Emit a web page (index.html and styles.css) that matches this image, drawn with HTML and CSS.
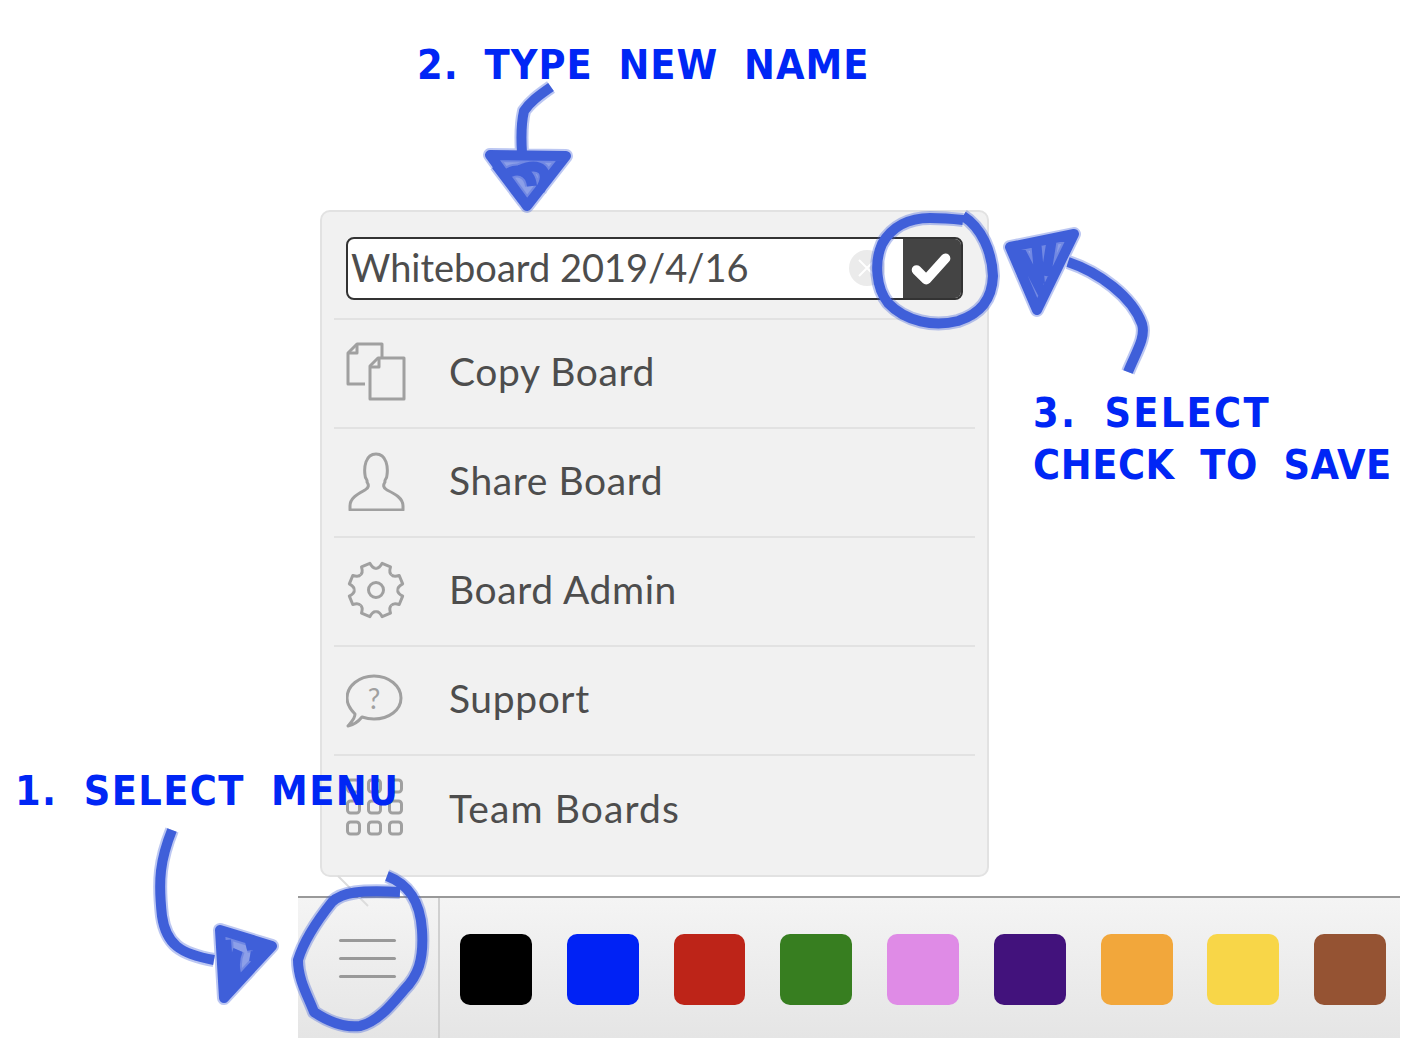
FILE: index.html
```html
<!DOCTYPE html>
<html lang="en">
<head>
    <meta charset="UTF-8">
    <meta name="viewport" content="width=device-width, initial-scale=1.0">
    <title>Rename a board</title>
    <link rel="stylesheet" href="styles.css">
</head>
<body>
    <div class="stage">
        <div class="popup">
            <div class="nameRow">
                <div class="nameField">
                    <input class="nameInput" type="text" value="Whiteboard 2019/4/16">
                    <span class="clearBtn">
                        <svg viewBox="0 0 36 36" width="36" height="36"><path class="clearX" d="M10 10 L26 26 M26 10 L10 26"/></svg>
                    </span>
                    <button class="saveBtn">
                        <svg viewBox="0 0 60 60" width="58" height="60"><path class="checkMark" d="M14 31 L24 41 L44 19"/></svg>
                    </button>
                </div>
            </div>
            <div class="menuRow">
                <svg class="menuIcon" viewBox="0 0 60 60">
                    <path d="M19 42 H2 V11 L11 2 H36 V15"/>
                    <path d="M2 11 H11 V2"/>
                    <path d="M24 24 L32 16 H58 V57 H24 Z"/>
                    <path d="M24 25 H33 V16"/>
                </svg>
                <span class="menuLabel">Copy Board</span>
            </div>
            <div class="menuRow">
                <svg class="menuIcon" viewBox="0 0 60 60">
                    <path d="M4 59 H57 V55 C57 47 49 43 41 39 C37 37 37 34 39 31 C38 29 41 28 41 24 C42 17 41 3 30 3 C19 3 18 17 19 24 C19 28 22 29 21 31 C23 34 23 37 19 39 C12 43 4 47 4 55 Z"/>
                </svg>
                <span class="menuLabel">Share Board</span>
            </div>
            <div class="menuRow">
                <svg class="menuIcon" viewBox="0 0 60 60">
                    <defs>
                        <path id="gearTooth" d="M21.6 9.7 C24 9.5 25 7 25.5 3 H34.5 C35 7 36 9.5 38.4 9.7"/>
                    </defs>
                    <use href="#gearTooth" transform="rotate(22.5 30 30)"/>
                    <use href="#gearTooth" transform="rotate(67.5 30 30)"/>
                    <use href="#gearTooth" transform="rotate(112.5 30 30)"/>
                    <use href="#gearTooth" transform="rotate(157.5 30 30)"/>
                    <use href="#gearTooth" transform="rotate(202.5 30 30)"/>
                    <use href="#gearTooth" transform="rotate(247.5 30 30)"/>
                    <use href="#gearTooth" transform="rotate(292.5 30 30)"/>
                    <use href="#gearTooth" transform="rotate(337.5 30 30)"/>
                    <circle cx="30" cy="30" r="7.5"/>
                </svg>
                <span class="menuLabel">Board Admin</span>
            </div>
            <div class="menuRow">
                <svg class="menuIcon" viewBox="0 0 60 60">
                    <path d="M9 45 C4 40 1 35 1 29 C1 17 13 7 28 7 C43 7 55 17 55 29 C55 41 43 50 28 50 C23 50 19 49 16 48 C12 53 7 56 2 57 C5 53 9 50 9 45 Z"/>
                    <text class="helpMark" x="28" y="40">?</text>
                </svg>
                <span class="menuLabel">Support</span>
            </div>
            <div class="menuRow lastRow">
                <svg class="menuIcon" viewBox="0 0 60 60">
                    <rect x="1.5" y="3" width="12" height="12" rx="3"/>
                    <rect x="22.5" y="3" width="12" height="12" rx="3"/>
                    <rect x="43.5" y="3" width="12" height="12" rx="3"/>
                    <rect x="1.5" y="24" width="12" height="12" rx="3"/>
                    <rect x="22.5" y="24" width="12" height="12" rx="3"/>
                    <rect x="43.5" y="24" width="12" height="12" rx="3"/>
                    <rect x="1.5" y="45" width="12" height="12" rx="3"/>
                    <rect x="22.5" y="45" width="12" height="12" rx="3"/>
                    <rect x="43.5" y="45" width="12" height="12" rx="3"/>
                </svg>
                <span class="menuLabel">Team Boards</span>
            </div>
        </div>

        <div class="toolbar">
            <div class="menuCell">
                <span class="burgerLine"></span>
                <span class="burgerLine"></span>
                <span class="burgerLine"></span>
            </div>
            <div class="swatches">
                <span class="swatch black"></span>
                <span class="swatch blue"></span>
                <span class="swatch red"></span>
                <span class="swatch green"></span>
                <span class="swatch pink"></span>
                <span class="swatch purple"></span>
                <span class="swatch orange"></span>
                <span class="swatch yellow"></span>
                <span class="swatch brown"></span>
            </div>
        </div>

        <!-- marker drawn on top of the screenshot -->
        <svg class="inkLayer" viewBox="0 0 1406 1040" width="1406" height="1040">
            <path class="tail" d="M338 876 L368 906"/>
            <path class="inkFill" d="M488 154 L568 155 L527 208 Z"/>
            <path class="inkFill" d="M1006 246 L1076 232 L1037 314 Z"/>
            <path class="inkFill" d="M219 928 L274 946 L222 1000 Z"/>
            <defs>
                <path id="arrowTwo" d="M551 87 C538 96 530 102 524 111 C521 124 521 138 522 153 M490 155 L566 156 L527 206 Z M496 165 L524 202 M504 176 C516 166 530 170 532 186 M520 170 C540 160 552 172 540 190"/>
                <path id="arrowThree" d="M1128 372 C1136 352 1146 338 1142 324 C1132 296 1098 272 1068 262 M1010 247 L1074 234 L1037 310 Z M1020 250 L1044 296 M1036 240 L1040 284 M1052 238 L1046 276"/>
                <path id="circleThree" d="M963 216 C982 228 992 252 993 276 C992 300 980 314 958 321 C934 327 906 322 888 303 C876 288 874 262 882 244 C892 226 910 218 930 218 C944 218 954 219 963 220"/>
                <path id="arrowOne" d="M172 830 C160 860 158 880 162 916 C166 944 180 954 214 960 M220 930 L272 946 L224 998 Z M226 940 L230 990 M238 950 C232 964 236 978 240 982 M246 946 C262 942 262 958 250 956"/>
                <path id="circleOne" d="M387 876 C408 884 420 900 422 930 C424 960 418 976 404 990 C392 1004 378 1022 360 1026 C342 1028 326 1020 314 1012 C308 996 298 980 298 960 C304 940 316 922 332 902 C342 892 360 890 400 892"/>
            </defs>
            <g class="inkWide">
                <use href="#arrowTwo"/><use href="#arrowThree"/><use href="#circleThree"/><use href="#arrowOne"/><use href="#circleOne"/>
            </g>
            <g class="inkCore">
                <use href="#arrowTwo"/><use href="#arrowThree"/><use href="#circleThree"/><use href="#arrowOne"/><use href="#circleOne"/>
            </g>
        </svg>

        <div class="note noteName">2. TYPE NEW NAME</div>
        <div class="note noteSave">
            <div class="saveLineOne">3. SELECT</div>
            <div class="saveLineTwo">CHECK TO SAVE</div>
        </div>
        <div class="note noteMenu">1. SELECT MENU</div>
    </div>
</body>
</html>
```

FILE: styles.css
```css
*{
    margin: 0;
    padding: 0;
    box-sizing: border-box;
}
body{
    background: #fff;
    font-family: 'Lato', 'Open Sans', sans-serif;
    overflow: hidden;
}
.stage{
    position: relative;
    width: 1406px;
    height: 1040px;
    padding-top: 210px;
}

/* popup menu */
.popup{
    width: 669px;
    height: 667px;
    margin-left: 320px;
    padding: 0 12px;
    background: #f1f1f1;
    border: 2px solid #e2e2e2;
    border-radius: 10px;
}
.nameRow{
    height: 108px;
    padding: 25px 12px 0;
    border-bottom: 2px solid #e2e2e2;
}
.nameField{
    display: flex;
    align-items: stretch;
    height: 63px;
    background: #fff;
    border: 2px solid #333;
    border-radius: 8px;
    overflow: hidden;
}
.nameInput{
    flex: 1;
    min-width: 0;
    border: none;
    outline: none;
    background: transparent;
    padding: 0 3px 4px;
    font-family: inherit;
    font-size: 38px;
    color: #4d4d4d;
}
.clearBtn{
    display: flex;
    align-items: center;
    justify-content: center;
    width: 36px;
    height: 36px;
    margin: 11px 18px 0 0;
    background: #ebebeb;
    border-radius: 50%;
}
.clearX{
    fill: none;
    stroke: #fff;
    stroke-width: 2;
}
.saveBtn{
    width: 58px;
    border: none;
    background: #444;
    cursor: pointer;
}
.checkMark{
    fill: none;
    stroke: #fff;
    stroke-width: 10;
    stroke-linecap: round;
    stroke-linejoin: round;
}
.menuRow{
    display: flex;
    align-items: center;
    height: 109px;
    padding-left: 12px;
    border-bottom: 2px solid #e2e2e2;
}
.lastRow{
    height: 120px;
    padding-bottom: 11px;
    border-bottom: none;
}
.menuIcon{
    flex: none;
    width: 60px;
    height: 60px;
    margin: 0 43px 4px 0;
    fill: none;
    stroke: #a0a0a0;
    stroke-width: 3;
    stroke-linejoin: round;
}
.lastRow .menuIcon{
    margin-bottom: 8px;
}
.helpMark{
    fill: #a0a0a0;
    stroke: none;
    font-family: 'Lato', sans-serif;
    font-size: 28px;
    text-anchor: middle;
}
.menuLabel{
    padding-bottom: 5px;
    font-size: 39px;
    letter-spacing: 0.6px;
    color: #4d4d4d;
    white-space: nowrap;
}
.lastRow .menuLabel{
    letter-spacing: 1.1px;
}

/* bottom toolbar */
.toolbar{
    display: flex;
    width: 1102px;
    height: 142px;
    margin: 19px 0 0 298px;
    background: linear-gradient(#f4f4f4, #e5e5e5);
    border-top: 2px solid #999;
}
.menuCell{
    display: flex;
    flex-direction: column;
    align-items: center;
    gap: 15px;
    width: 142px;
    padding: 41px 2px 0 0;
    border-right: 2px solid #d0d0d0;
}
.burgerLine{
    width: 57px;
    height: 3px;
    background: #999;
    border-radius: 2px;
}
.swatches{
    display: flex;
    gap: 34.9px;
    padding: 36px 0 0 20px;
}
.swatch{
    width: 71.9px;
    height: 71px;
    border-radius: 10px;
}
.black{ background: #000; }
.blue{ background: #0022f5; }
.red{ background: #bd2418; }
.green{ background: #377e20; }
.pink{ background: #df8be6; }
.purple{ background: #42127c; }
.orange{ background: #f2a73b; }
.yellow{ background: #f8d648; }
.brown{ background: #955333; }

/* annotations on top of everything */
.inkLayer{
    position: absolute;
    left: 0;
    top: 0;
    pointer-events: none;
}
.tail{
    fill: none;
    stroke: #dcdcdc;
    stroke-width: 2;
}
.inkFill{
    fill: #3f5fd9;
    opacity: 0.6;
}
.inkWide, .inkCore{
    fill: none;
    stroke: #3f5fd9;
    stroke-linejoin: round;
}
.inkWide{
    stroke-width: 14;
    opacity: 0.35;
}
.inkCore{
    stroke-width: 10;
}
.note{
    position: absolute;
    color: #0026f5;
    font-family: 'DejaVu Sans Condensed', 'DejaVu Sans', sans-serif;
    font-stretch: condensed;
    font-weight: bold;
    font-size: 41px;
    line-height: 52px;
    white-space: nowrap;
    word-spacing: 12px;
}
.noteName{
    left: 417px;
    top: 39px;
    letter-spacing: 1px;
}
.noteSave{
    left: 1033px;
    top: 387px;
}
.saveLineOne{
    letter-spacing: 2.3px;
}
.saveLineTwo{
    letter-spacing: 0.6px;
}
.noteMenu{
    left: 15px;
    top: 765px;
    letter-spacing: 1.4px;
}
```
